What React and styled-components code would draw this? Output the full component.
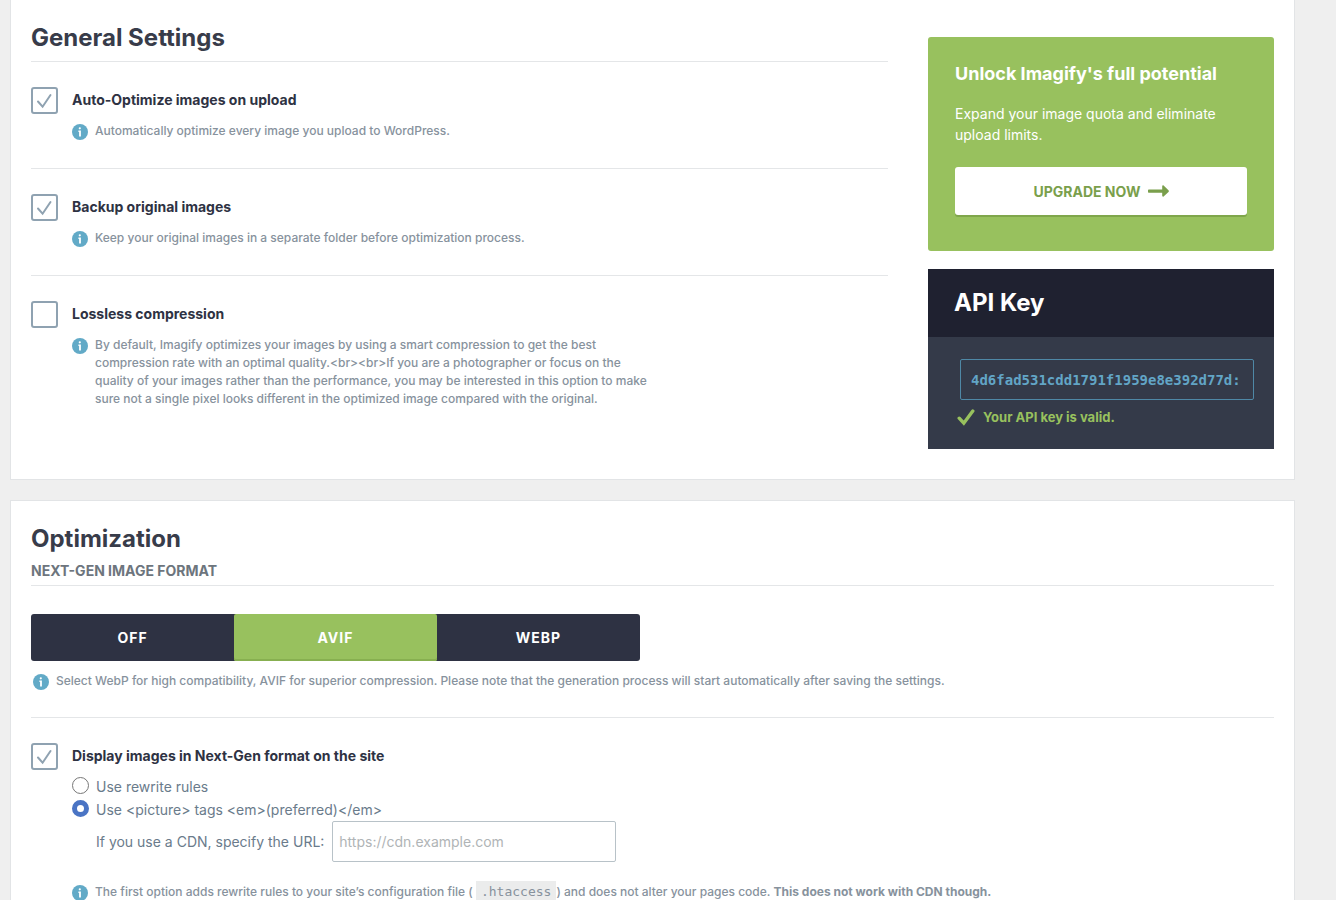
import React, { useState } from "react";
import styled, { createGlobalStyle } from "styled-components";

const generalOptions = [
  {
    id: "auto-optimize",
    title: "Auto-Optimize images on upload",
    info: "Automatically optimize every image you upload to WordPress.",
    checked: true,
  },
  {
    id: "backup",
    title: "Backup original images",
    info: "Keep your original images in a separate folder before optimization process.",
    checked: true,
  },
  {
    id: "lossless",
    title: "Lossless compression",
    info: "By default, Imagify optimizes your images by using a smart compression to get the best compression rate with an optimal quality.<br><br>If you are a photographer or focus on the quality of your images rather than the performance, you may be interested in this option to make sure not a single pixel looks different in the optimized image compared with the original.",
    checked: false,
  },
];
const formats = ["Off", "AVIF", "WebP"];
const displayMethods = [
  { id: "rewrite", label: "Use rewrite rules" },
  { id: "picture", label: "Use <picture> tags <em>(preferred)</em>" },
];

const InfoIcon = () => (
  <InfoSvg viewBox="0 0 16 16" aria-hidden="true">
    <circle cx="8" cy="8" r="8" fill="#62aac7" />
    <circle cx="7.8" cy="4.3" r="1.1" fill="#fff" />
    <path d="M6.4 6.6h2.5v6H7.1V8.1h-.7z" fill="#fff" />
  </InfoSvg>
);

const CheckOption = ({ id, title, defaultChecked, children }) => {
  const [checked, setChecked] = useState(defaultChecked);

  return (
    <OptionRow>
      <CheckWrapper>
        <CheckInput
          type="checkbox"
          id={id}
          checked={checked}
          onChange={() => setChecked(!checked)}
        />
        {checked && (
          <CheckMark viewBox="0 0 27 27" aria-hidden="true">
            <path d="M7 14.5l4.6 5.2L19.5 8" />
          </CheckMark>
        )}
      </CheckWrapper>
      <OptionContent>
        <OptionTitle htmlFor={id}>{title}</OptionTitle>
        {children}
      </OptionContent>
    </OptionRow>
  );
};

const App = () => {
  const [format, setFormat] = useState("AVIF");
  const [method, setMethod] = useState("picture");
  const [apiKey, setApiKey] = useState("4d6fad531cdd1791f1959e8e392d77d:");
  const [cdn, setCdn] = useState("");

  return (
    <>
      <GlobalStyle />
      <Page>
        <Panel $first>
          <GeneralGrid>
            <section>
              <PanelHeader>
                <PanelTitle>General Settings</PanelTitle>
              </PanelHeader>
              <OptionList>
                {generalOptions.map((item) => (
                  <CheckOption
                    key={item.id}
                    id={item.id}
                    title={item.title}
                    defaultChecked={item.checked}
                  >
                    <Info $spaced>
                      <InfoIcon />
                      <InfoText $narrow>{item.info}</InfoText>
                    </Info>
                  </CheckOption>
                ))}
              </OptionList>
            </section>
            <Sidebar>
              <UpgradeCard>
                <UpgradeTitle>Unlock Imagify's full potential</UpgradeTitle>
                <UpgradeText>
                  Expand your image quota and eliminate upload limits.
                </UpgradeText>
                <UpgradeButton type="button">
                  Upgrade now
                  <ArrowSvg viewBox="0 0 21 12" aria-hidden="true">
                    <path d="M1 4.4h13.2V1.2c0-.8.8-1.1 1.4-.6l4.9 4.6c.5.5.5 1.2 0 1.7l-4.9 4.5c-.6.5-1.4.2-1.4-.6V7.7H1c-.6 0-1-.4-1-1V5.4c0-.6.4-1 1-1z" />
                  </ArrowSvg>
                </UpgradeButton>
              </UpgradeCard>
              <ApiCard>
                <ApiHeader>
                  <ApiTitle>API Key</ApiTitle>
                </ApiHeader>
                <ApiBody>
                  <ApiInput
                    type="text"
                    aria-label="API Key"
                    value={apiKey}
                    onChange={(e) => setApiKey(e.target.value)}
                  />
                  <ApiStatus>
                    <ValidSvg viewBox="0 0 18 17" aria-hidden="true">
                      <path d="M2.2 9.2l4.6 5L15.8 2" />
                    </ValidSvg>
                    Your API key is valid.
                  </ApiStatus>
                </ApiBody>
              </ApiCard>
            </Sidebar>
          </GeneralGrid>
        </Panel>

        <Panel>
          <PanelHeader>
            <PanelTitle>Optimization</PanelTitle>
            <PanelSubtitle>Next-Gen image format</PanelSubtitle>
          </PanelHeader>
          <FormatSection>
            <FormatGroup>
              {formats.map((item) => (
                <FormatButton
                  key={item}
                  type="button"
                  aria-pressed={format === item}
                  $active={format === item}
                  onClick={() => setFormat(item)}
                >
                  {item}
                </FormatButton>
              ))}
            </FormatGroup>
            <FormatInfo>
              <InfoIcon />
              <InfoText>
                Select WebP for high compatibility, AVIF for superior
                compression. Please note that the generation process will start
                automatically after saving the settings.
              </InfoText>
            </FormatInfo>
          </FormatSection>
          <CheckOption
            id="display-nextgen"
            title="Display images in Next-Gen format on the site"
            defaultChecked
          >
            <RadioList>
              {displayMethods.map((item) => (
                <RadioLabel key={item.id}>
                  <RadioInput
                    type="radio"
                    name="display-method"
                    checked={method === item.id}
                    onChange={() => setMethod(item.id)}
                  />
                  {item.label}
                </RadioLabel>
              ))}
            </RadioList>
            <CdnRow>
              <label htmlFor="cdn-url">If you use a CDN, specify the URL:</label>
              <CdnInput
                id="cdn-url"
                type="text"
                placeholder="https://cdn.example.com"
                value={cdn}
                onChange={(e) => setCdn(e.target.value)}
              />
            </CdnRow>
            <MethodInfo>
              <InfoIcon />
              <InfoText>
                The first option adds rewrite rules to your site’s configuration
                file ( <Code>.htaccess</Code>) and does not alter your pages
                code. <strong>This does not work with CDN though.</strong>
              </InfoText>
            </MethodInfo>
          </CheckOption>
        </Panel>
      </Page>
    </>
  );
};

const GlobalStyle = createGlobalStyle`
  * {
    box-sizing: border-box;
  }
  body {
    margin: 0;
    background-color: #efefef;
    font-family: Inter, "Liberation Sans", sans-serif;
    color: #2e3243;
  }
  button, input {
    font-family: inherit;
  }
`;
const Page = styled.main`
  height: 100vh;
  overflow: hidden;
  padding: 0 41px 0 10px;
  display: flex;
  flex-direction: column;
  gap: 20px;
`;
const Panel = styled.div`
  flex-shrink: 0;
  padding: 22px 20px 40px;
  background-color: #fff;
  border: 1px solid #e2e4e6;
  ${(props) =>
    props.$first &&
    `
        border-top: none;
        padding-bottom: 30px;
    `}
`;
const GeneralGrid = styled.div`
  display: grid;
  grid-template-columns: minmax(0, 1fr) 346px;
  gap: 40px;
`;
const PanelHeader = styled.header`
  padding-bottom: 4px;
  border-bottom: 1px solid #e4e6e8;
`;
const PanelTitle = styled.h2`
  margin: 0;
  padding-bottom: 3px;
  font-size: 24px;
  line-height: 32px;
  font-weight: 700;
  color: #383c4a;
`;
const PanelSubtitle = styled.p`
  margin: 3px 0 0;
  font-size: 14px;
  line-height: 20px;
  font-weight: 700;
  text-transform: uppercase;
  color: #6d757d;
`;
const OptionList = styled.div`
  > div + div {
    border-top: 1px solid #e4e6e8;
  }
`;
const OptionRow = styled.div`
  display: flex;
  gap: 14px;
  padding: 25px 0 28px;
`;
const CheckWrapper = styled.div`
  position: relative;
  flex-shrink: 0;
  width: 27px;
  height: 27px;
`;
const CheckInput = styled.input`
  appearance: none;
  display: block;
  width: 100%;
  height: 100%;
  margin: 0;
  background-color: #fff;
  border: 2px solid #8fa2b1;
  border-radius: 3px;
  cursor: pointer;
`;
const CheckMark = styled.svg`
  position: absolute;
  inset: 0;
  pointer-events: none;
  fill: none;
  stroke: #8fa2b1;
  stroke-width: 2;
  stroke-linecap: round;
`;
const OptionContent = styled.div`
  flex: 1;
  min-width: 0;
`;
const OptionTitle = styled.label`
  display: block;
  font-size: 14px;
  line-height: 26px;
  font-weight: 700;
  cursor: pointer;
`;
const Info = styled.div`
  display: flex;
  align-items: flex-start;
  gap: 7px;
  ${(props) => props.$spaced && `margin-top: 9px;`}
`;
const FormatInfo = styled(Info)`
  margin-top: 11px;
  padding-left: 2px;
`;
const MethodInfo = styled(Info)`
  margin-top: 21px;
`;
const InfoSvg = styled.svg`
  flex-shrink: 0;
  width: 16px;
  height: 16px;
  margin-top: 2px;
`;
const InfoText = styled.p`
  margin: 0;
  font-size: 12px;
  line-height: 18px;
  font-weight: 500;
  color: #87929d;
  ${(props) => props.$narrow && `max-width: 560px;`}
`;
const Sidebar = styled.aside`
  display: flex;
  flex-direction: column;
  gap: 18px;
  padding-top: 15px;
`;
const UpgradeCard = styled.section`
  padding: 24px 27px 34px;
  background-color: #98c15e;
  border-radius: 3px;
  color: #fff;
`;
const UpgradeTitle = styled.h3`
  margin: 0;
  font-size: 18px;
  line-height: 26px;
  font-weight: 700;
`;
const UpgradeText = styled.p`
  margin: 16px 0 22px;
  font-size: 14px;
  line-height: 21px;
`;
const UpgradeButton = styled.button`
  display: flex;
  justify-content: center;
  align-items: center;
  gap: 7px;
  width: 100%;
  height: 48px;
  margin-bottom: 2px;
  border: none;
  border-radius: 3px;
  background-color: #fff;
  box-shadow: 0 2px 0 #7fa64b;
  font-size: 14px;
  font-weight: 700;
  text-transform: uppercase;
  color: #7a9f4c;
  cursor: pointer;
`;
const ArrowSvg = styled.svg`
  width: 21px;
  height: 12px;
  fill: currentColor;
`;
const ApiCard = styled.section`
  background-color: #343a49;
`;
const ApiHeader = styled.header`
  padding: 18px 26px;
  background-color: #1f2130;
`;
const ApiTitle = styled.h2`
  margin: 0;
  font-size: 24px;
  line-height: 32px;
  font-weight: 700;
  color: #fff;
`;
const ApiBody = styled.div`
  padding: 22px 20px 21px 32px;
`;
const ApiInput = styled.input`
  display: block;
  width: 100%;
  height: 41px;
  padding: 0 10px;
  border: 1px solid #4f88a6;
  border-radius: 2px;
  background: transparent;
  font-family: "DejaVu Sans Mono", monospace;
  font-size: 14px;
  font-weight: 700;
  color: #62a5c6;
`;
const ApiStatus = styled.p`
  display: flex;
  align-items: center;
  gap: 8px;
  margin: 6px 0 0 -3px;
  font-size: 13px;
  line-height: 22px;
  font-weight: 700;
  color: #98c15e;
`;
const ValidSvg = styled.svg`
  width: 18px;
  height: 17px;
  fill: none;
  stroke: currentColor;
  stroke-width: 3.4;
  stroke-linecap: round;
`;
const FormatSection = styled.div`
  padding: 28px 0 27px;
  border-bottom: 1px solid #e4e6e8;
`;
const FormatGroup = styled.div`
  display: grid;
  grid-template-columns: repeat(3, 1fr);
  max-width: 609px;
  border-radius: 3px;
  overflow: hidden;
  background-color: #2e3243;
`;
const FormatButton = styled.button`
  height: 47px;
  border: none;
  background: transparent;
  font-size: 14px;
  font-weight: 700;
  letter-spacing: 1px;
  text-transform: uppercase;
  color: #fff;
  cursor: pointer;
  ${(props) =>
    props.$active &&
    `
        background-color: #98c15e;
        border-radius: 2px;
        box-shadow: inset 0 -2px 0 #87af50;
    `}
`;
const RadioList = styled.div`
  margin-top: 6px;
`;
const RadioLabel = styled.label`
  display: flex;
  align-items: center;
  gap: 7px;
  font-size: 14px;
  line-height: 23px;
  color: #6a7b8b;
  cursor: pointer;
`;
const RadioInput = styled.input`
  appearance: none;
  width: 17px;
  height: 17px;
  margin: 0 0 2px;
  border: 1px solid #777;
  border-radius: 50%;
  background-color: #fff;
  &:checked {
    border: 5px solid #4a74c4;
  }
`;
const CdnRow = styled.div`
  display: flex;
  align-items: center;
  gap: 8px;
  padding-left: 24px;
  font-size: 14px;
  color: #6a7b8b;
`;
const CdnInput = styled.input`
  width: 284px;
  height: 41px;
  padding: 0 6px;
  border: 1px solid #b8c2c8;
  border-radius: 2px;
  font-size: 14px;
  color: #6a7b8b;
  &::placeholder {
    color: #b0b4b6;
  }
`;
const Code = styled.code`
  padding: 3px 5px 2px;
  background-color: #ebecec;
  font-family: "DejaVu Sans Mono", monospace;
  font-size: 13px;
`;
export default App;
